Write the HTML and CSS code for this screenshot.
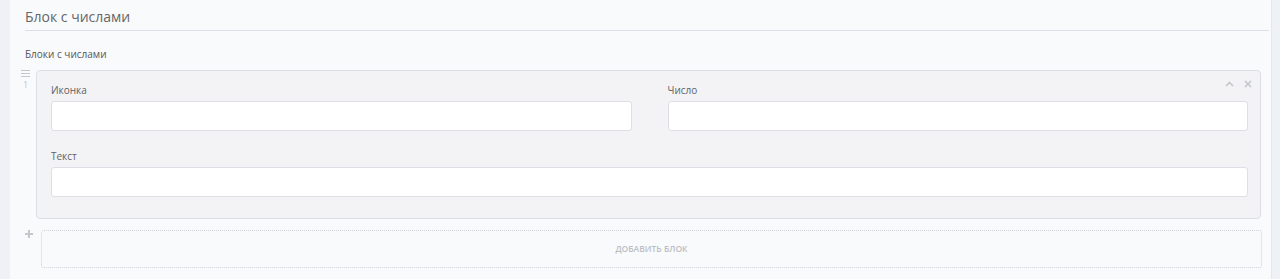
FILE: index.html
```html
<!DOCTYPE html>
<html lang="ru">
<head>
    <meta charset="UTF-8">
    <title>Блок с числами</title>
    <link rel="stylesheet" href="styles.css">
</head>
<body>
    <div class="panel">
        <h2 class="title">Блок с числами</h2>
        <div class="field-label">Блоки с числами</div>

        <div class="repeater-row">
            <div class="handle">
                <svg class="grip" width="9" height="7" viewBox="0 0 9 7"><path d="M0 0.5 H9 M0 3.5 H9 M0 6.5 H9" stroke="#c4c6ca" stroke-width="1"/></svg>
                <span class="index">1</span>
            </div>
            <div class="card">
                <div class="card-actions">
                    <svg width="9" height="6" viewBox="0 0 9 6"><path d="M1 5 L4.5 1.5 L8 5" fill="none" stroke="#c4c6ca" stroke-width="1.6"/></svg>
                    <svg width="8" height="8" viewBox="0 0 8 8"><path d="M1 1 L7 7 M7 1 L1 7" fill="none" stroke="#c4c6ca" stroke-width="1.6"/></svg>
                </div>
                <div class="grid">
                    <div class="field">
                        <label>Иконка</label>
                        <input type="text">
                    </div>
                    <div class="field">
                        <label>Число</label>
                        <input type="text">
                    </div>
                </div>
                <div class="field wide">
                    <label>Текст</label>
                    <input type="text">
                </div>
            </div>
        </div>

        <div class="add-row">
            <svg class="plus" width="8" height="8" viewBox="0 0 8 8"><path d="M4 0 V8 M0 4 H8" stroke="#c4c6ca" stroke-width="2"/></svg>
            <div class="add-button">Добавить блок</div>
        </div>
    </div>
</body>
</html>
```

FILE: styles.css
```css
body {
    margin: 0;
    background-color: #eef1f5;
    font-family: "Open Sans", Arial, sans-serif;
    color: #555;
}
.panel {
    margin: 0 8px 0 10px;
    height: 279px;
    box-sizing: border-box;
    padding: 7px 2px 0 15px;
    background: #f9fafc;
    border-right: 1px solid #e4e7ec;
}
.title {
    margin: 0;
    font-size: 14px;
    line-height: 20px;
    font-weight: normal;
    color: #666;
    padding-bottom: 3px;
    border-bottom: 1px solid #dcdfe6;
}
.field-label {
    margin-top: 16px;
    margin-bottom: 9px;
    font-size: 10px;
    line-height: 14px;
    color: #555;
}
.repeater-row {
    display: flex;
    margin-left: -5px;
    margin-right: 8px;
}
.handle {
    width: 16px;
    display: flex;
    flex-direction: column;
    align-items: flex-start;
    color: #c4c6ca;
}
.grip {
    display: block;
    margin-left: 1px;
}
.index {
    font-size: 9px;
    line-height: 10px;
    margin-top: 3px;
    padding-left: 3px;
}
.card {
    flex: 1;
    position: relative;
    background: #f3f3f5;
    border: 1px solid #dcdee3;
    border-radius: 4px;
    padding: 12px 12px 21px 14px;
}
.card-actions {
    position: absolute;
    top: 9px;
    right: 8px;
    display: flex;
    align-items: center;
    gap: 10px;
}
.grid {
    display: grid;
    grid-template-columns: 1fr 1fr;
    gap: 36px;
}
.field label {
    display: block;
    font-size: 10px;
    line-height: 14px;
    margin-bottom: 4px;
    color: #606266;
}
.field input {
    display: block;
    width: 100%;
    box-sizing: border-box;
    height: 30px;
    border: 1px solid #dcdfe6;
    border-radius: 3px;
    background: #fff;
}
.wide {
    margin-top: 18px;
}
.add-row {
    display: flex;
    margin-top: 11px;
    margin-right: 7px;
}
.plus {
    display: block;
    margin: 0 8px 0 0;
    flex-shrink: 0;
}
.add-button {
    flex: 1;
    height: 36px;
    line-height: 36px;
    border: 1px dotted #cfd2d7;
    border-radius: 3px;
    text-align: center;
    text-transform: uppercase;
    font-size: 8.5px;
    font-weight: 600;
    color: #bcbec2;
}
```
